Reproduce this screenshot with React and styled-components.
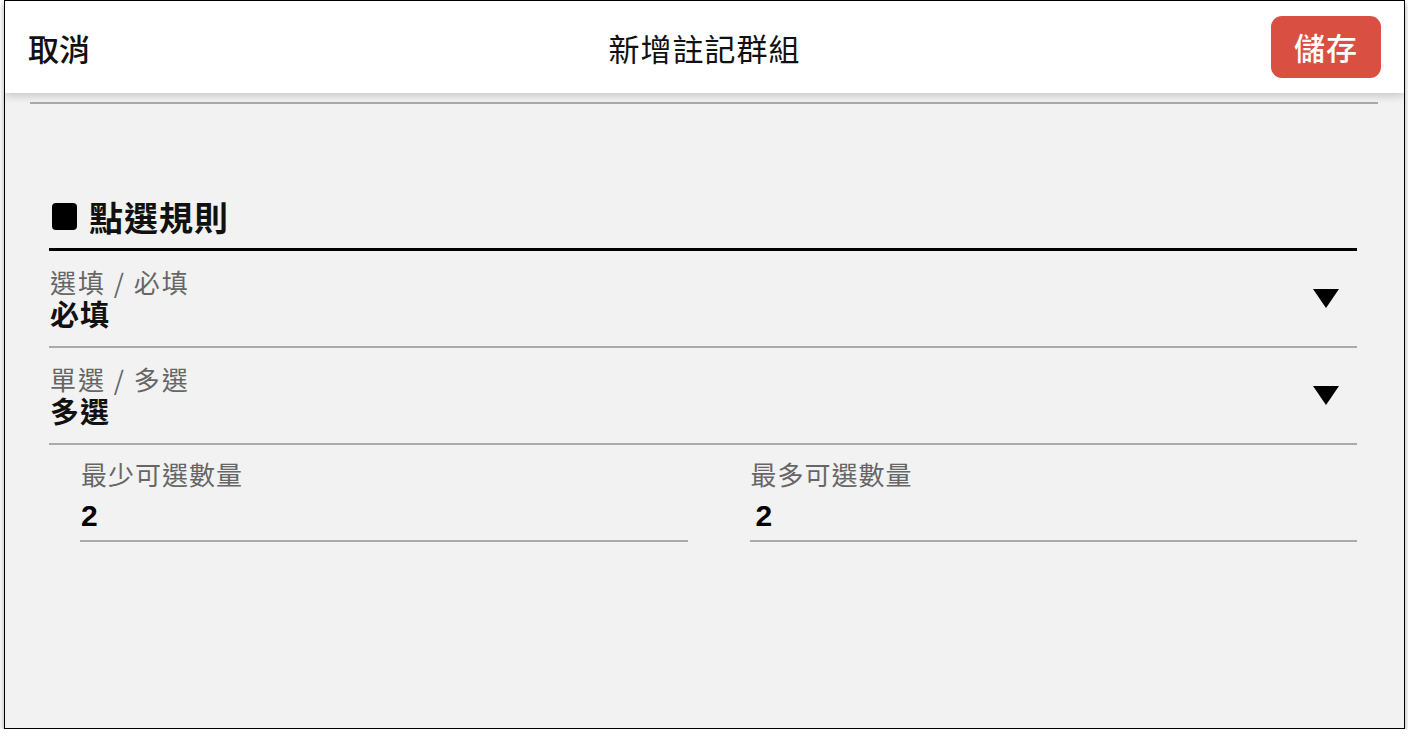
import styled, { createGlobalStyle } from 'styled-components';

const GlobalStyle = createGlobalStyle`
  html, body {
    margin: 0;
    padding: 0;
    background: #ffffff;
  }
  body {
    font-family: "Noto Sans CJK TC", "Noto Sans", sans-serif;
  }
`

const Frame = styled.div`
  box-sizing: border-box;
  margin-left: 4px;
  width: 1401px;
  height: 729px;
  border: 1px solid #000;
  background: #f2f2f2;
  box-shadow: 0 3px 6px rgba(0, 0, 0, 0.35);
  display: flex;
  flex-direction: column;
  overflow: hidden;
`

const Header = styled.header`
  position: relative;
  z-index: 1;
  height: 92px;
  flex-shrink: 0;
  background: #fff;
  box-shadow: 0 3px 8px rgba(0, 0, 0, 0.18);
  display: grid;
  grid-template-columns: 1fr auto 1fr;
  align-items: center;
  padding: 0 23px;
`

const Cancel = styled.button`
  justify-self: start;
  border: 0;
  background: none;
  padding: 0;
  font-family: inherit;
  font-size: 31px;
  font-weight: 500;
  color: #111;
`

const Title = styled.h1`
  margin: 0;
  font-size: 31px;
  font-weight: 400;
  letter-spacing: 1px;
  color: #111;
`

const SaveButton = styled.button`
  justify-self: end;
  width: 110px;
  height: 62px;
  margin-top: -1px;
  border: 0;
  border-radius: 11px;
  background: #d95043;
  color: #fff;
  font-family: inherit;
  font-size: 31px;
  font-weight: 500;
  letter-spacing: 1px;
`

const Body = styled.main`
  padding: 9px 26px 0 25px;
`

const TopRule = styled.div`
  height: 2px;
  background: #aaa;
`

const Section = styled.section`
  margin: 90px 21px 0 19px;
`

const SectionTitle = styled.h2`
  margin: 0;
  display: flex;
  align-items: center;
  gap: 12px;
  height: 44px;
  padding-bottom: 10px;
  border-bottom: 3px solid #000;
  font-size: 34px;
  font-weight: 700;
  letter-spacing: 1px;
  color: #111;
`

const Square = styled.span`
  width: 25px;
  height: 27px;
  margin-left: 3px;
  border-radius: 4px;
  background: #000;
`

const SelectRow = styled.div`
  display: flex;
  align-items: center;
  padding: 16px 18px 17px 1px;
  border-bottom: 2px solid #aaa;
`

const FieldText = styled.div`
  flex: 1;
  display: flex;
  flex-direction: column;
`

const Label = styled.span`
  font-size: 26px;
  line-height: 30px;
  color: #666;
  letter-spacing: ${p => p.$spacing || 1}px;
`

const Value = styled.span`
  font-size: 29px;
  line-height: 32px;
  font-weight: 700;
  letter-spacing: 1px;
  color: #111;
`

const Arrow = styled.svg`
  width: 26px;
  height: 19px;
`

const NumberGrid = styled.div`
  display: grid;
  grid-template-columns: 1fr 1fr;
  column-gap: 62px;
  padding-left: 31px;
`

const NumberField = styled.div`
  display: flex;
  flex-direction: column;
  gap: 7px;
  padding: 14px 0 4px 1px;
  border-bottom: 2px solid #aaa;
`

const NumberValue = styled.span`
  font-family: "Liberation Sans", Arial, sans-serif;
  font-size: 30px;
  line-height: 40px;
  font-weight: 700;
  color: #000;
  padding-left: ${p => p.$indent || 0}px;
`

function DownArrow() {
  return (
    <Arrow viewBox="0 0 26 19">
      <polygon points="0,0 26,0 13,19" fill="#000" />
    </Arrow>
  )
}

function SelectField({ label, value }) {
  return (
    <SelectRow>
      <FieldText>
        <Label $spacing={2}>{label}</Label>
        <Value>{value}</Value>
      </FieldText>
      <DownArrow />
    </SelectRow>
  )
}

export default function App() {
  return (
    <>
      <GlobalStyle />
      <Frame>
        <Header>
          <Cancel>取消</Cancel>
          <Title>新增註記群組</Title>
          <SaveButton>儲存</SaveButton>
        </Header>

        <Body>
          <TopRule />
          <Section>
            <SectionTitle>
              <Square />
              點選規則
            </SectionTitle>

            <SelectField label="選填 / 必填" value="必填" />
            <SelectField label="單選 / 多選" value="多選" />

            <NumberGrid>
              <NumberField>
                <Label>最少可選數量</Label>
                <NumberValue>2</NumberValue>
              </NumberField>
              <NumberField>
                <Label>最多可選數量</Label>
                <NumberValue $indent={5}>2</NumberValue>
              </NumberField>
            </NumberGrid>
          </Section>
        </Body>
      </Frame>
    </>
  )
}
